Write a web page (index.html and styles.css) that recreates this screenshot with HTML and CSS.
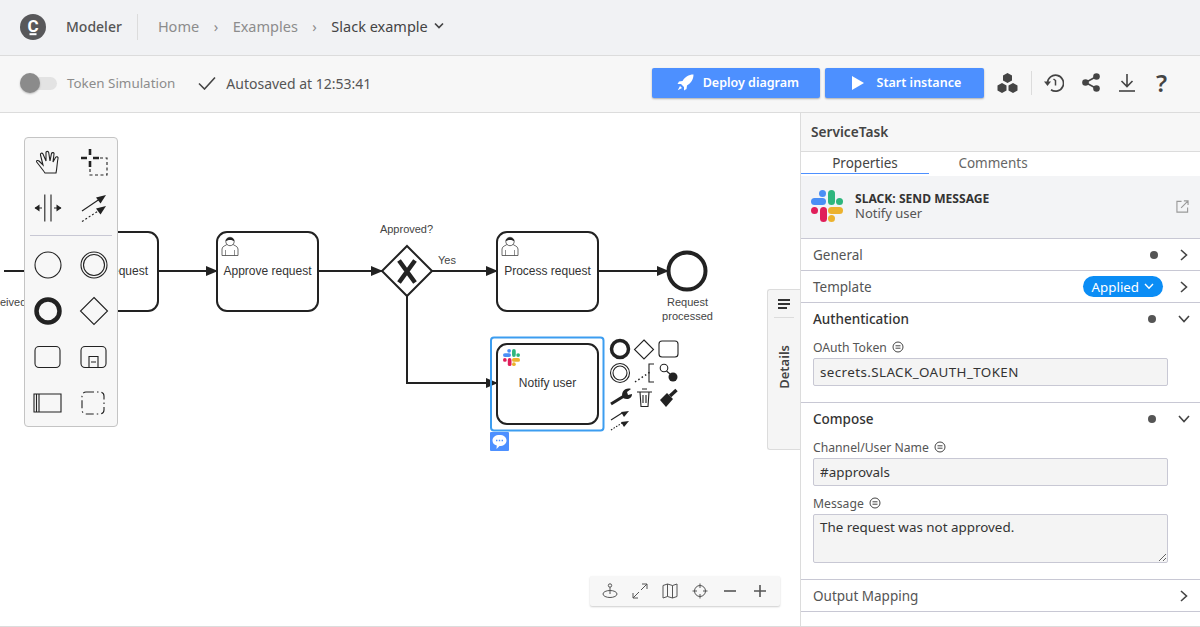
FILE: index.html
```html
<!DOCTYPE html>
<html lang="en">
<head>
    <meta charset="UTF-8">
    <title>Modeler - Slack example</title>
    <link rel="stylesheet" href="styles.css">
</head>
<body>
    <svg class="defs" width="0" height="0">
        <symbol id="slack" viewBox="0 0 32 32">
            <rect x="0" y="8" width="15" height="7" rx="3.5" fill="#4a8ff5"/>
            <circle cx="11.5" cy="3.5" r="3.5" fill="#4a8ff5"/>
            <rect x="17" y="0" width="7" height="15" rx="3.5" fill="#2eb67d"/>
            <circle cx="28.5" cy="11.5" r="3.5" fill="#2eb67d"/>
            <rect x="17" y="17" width="15" height="7" rx="3.5" fill="#ecb22e"/>
            <circle cx="20.5" cy="28.5" r="3.5" fill="#ecb22e"/>
            <rect x="9" y="17" width="7" height="15" rx="3.5" fill="#e01e5a"/>
            <circle cx="3.5" cy="20.5" r="3.5" fill="#e01e5a"/>
        </symbol>
        <symbol id="user" viewBox="0 0 18 20">
            <path d="M1 19.5V13C1 10.2 5 9.6 6.5 8H11.500C13 9.600 17 10.200 17 13V19.500Z" fill="#fff" stroke="#444" stroke-width=".8"/>
            <path d="M4.500 19.500V14M13.500 19.500V14" fill="none" stroke="#444" stroke-width=".6"/>
            <circle cx="9" cy="5.500" r="4.200" fill="#fff" stroke="#444" stroke-width=".8"/>
            <path d="M4.800 5.500C4.300 .2 13.700 .2 13.200 5.500C12 3.500 6 3.500 4.800 5.500Z" fill="#222"/>
        </symbol>
        <symbol id="connect" viewBox="0 0 30 30">
            <path d="M3 18L20 6.500" fill="none" stroke="#222" stroke-width="1.100"/>
            <path d="M27 2L21.500 10.500L17 4.500Z" fill="#222"/>
            <path d="M3 28.500L20 17.500" fill="none" stroke="#222" stroke-width="1.100" stroke-dasharray="2 2"/>
            <path d="M27 13L21.500 21.500L17 15.500Z" fill="#222"/>
        </symbol>
        <symbol id="info" viewBox="0 0 12 12">
            <circle cx="6" cy="6" r="5" fill="none" stroke="#444" stroke-width="1"/>
            <path d="M3.500 4.800H8.500M3.500 7.200H8.500" stroke="#444" stroke-width="1"/>
        </symbol>
    </svg>

    <header class="topbar">
        <svg class="logo" width="26" height="26" viewBox="0 0 26 26">
            <circle cx="13" cy="13" r="13" fill="#58585a"/>
            <text x="13" y="17.500" text-anchor="middle" class="logo-letter">C</text>
            <rect x="9.500" y="19.200" width="7" height="2" fill="#fff"/>
        </svg>
        <span class="brand">Modeler</span>
        <span class="topbar-sep"></span>
        <nav class="crumbs">
            <span class="crumb">Home</span>
            <span class="crumb-arrow">›</span>
            <span class="crumb">Examples</span>
            <span class="crumb-arrow">›</span>
            <span class="crumb current">Slack example</span>
            <svg class="crumb-chevron" width="10" height="7" viewBox="0 0 10 7"><path d="M1 1.500L5 5.500L9 1.500" fill="none" stroke="#444" stroke-width="1.700"/></svg>
        </nav>
    </header>

    <div class="toolbar">
        <div class="toggle"><span class="knob"></span></div>
        <span class="toggle-label">Token Simulation</span>
        <svg class="check" width="18" height="14" viewBox="0 0 18 14"><path d="M1 7.500L6.500 13L17 1.500" fill="none" stroke="#444" stroke-width="1.600"/></svg>
        <span class="saved">Autosaved at 12:53:41</span>
        <div class="toolbar-right">
            <button class="btn btn-deploy">
                <svg width="17" height="17" viewBox="0 0 17 17"><path d="M16.500 .5C11.500 .5 8 3 5.500 7L2 7.500L.5 10L4 10L7 13L7 16.500L9.500 15L10 11.500C14 9 16.500 5.500 16.500 .5Z" fill="#fff"/><path d="M3 12L.8 16.200L5 14Z" fill="#fff"/></svg>
                Deploy diagram
            </button>
            <button class="btn btn-start">
                <svg width="12" height="14" viewBox="0 0 12 14"><path d="M0 0L12 7L0 14Z" fill="#fff"/></svg>
                Start instance
            </button>
            <svg class="tool-icon cubes" width="21" height="20" viewBox="0 0 21 20"><path d="M10.500 0L15 2.500V7.500L10.500 10L6 7.500V2.500Z" fill="#444"/><path d="M5 10L9.500 12.500V17.500L5 20L.5 17.500V12.500Z" fill="#444"/><path d="M16 10L20.500 12.500V17.500L16 20L11.500 17.500V12.500Z" fill="#444"/></svg>
            <span class="tool-sep"></span>
            <svg class="tool-icon history" width="20" height="20" viewBox="0 0 20 20"><path d="M3.500 10A8 8 0 1 1 7 16.800" fill="none" stroke="#444" stroke-width="1.700"/><path d="M0 8.500H7L3.500 13Z" fill="#444"/><path d="M9.500 6L11.500 7.500V12.500" fill="none" stroke="#444" stroke-width="1.500"/></svg>
            <svg class="tool-icon share" width="18" height="19" viewBox="0 0 18 19"><circle cx="3.500" cy="9.500" r="3.300" fill="#444"/><circle cx="14.500" cy="3.500" r="3.300" fill="#444"/><circle cx="14.500" cy="15.500" r="3.300" fill="#444"/><path d="M3.500 9.500L14.500 3.500M3.500 9.500L14.500 15.500" stroke="#444" stroke-width="1.500"/></svg>
            <svg class="tool-icon download" width="16" height="18" viewBox="0 0 16 18"><path d="M8 0V12M2.500 7L8 12.500L13.500 7" fill="none" stroke="#444" stroke-width="1.600"/><path d="M0 17H16" stroke="#444" stroke-width="1.600"/></svg>
            <span class="help">?</span>
        </div>
    </div>

    <main class="workspace">
        <section class="canvas">
            <svg class="diagram" width="800" height="513" viewBox="0 113 800 513">
                <defs>
                    <marker id="arrow" viewBox="0 0 12 10" refX="11" refY="5" markerWidth="12" markerHeight="10" markerUnits="userSpaceOnUse" orient="auto"><path d="M0 0L12 5L0 10Z" fill="#222"/></marker>
                </defs>
                <g class="flow">
                    <path d="M4 271H60"/>
                    <path d="M158 271H217" marker-end="url(#arrow)"/>
                    <path d="M318 271H382" marker-end="url(#arrow)"/>
                    <path d="M432 271H497" marker-end="url(#arrow)"/>
                    <path d="M598 271H668" marker-end="url(#arrow)"/>
                    <path d="M407 296V383H497" marker-end="url(#arrow)"/>
                </g>
                <g class="shape">
                    <rect x="58" y="232" width="100" height="79" rx="10"/>
                    <rect x="217" y="232" width="101" height="79" rx="10"/>
                    <rect x="497" y="232" width="101" height="79" rx="10"/>
                    <rect x="497" y="344" width="101" height="80" rx="10"/>
                    <path d="M407 246L432 271L407 296L382 271Z"/>
                </g>
                <path class="gate-x" d="M399 260.500L415 282.500M415 260.500L399 282.500"/>
                <circle class="end-event" cx="687" cy="271" r="18.500"/>
                <rect class="selection" x="491" y="337.500" width="112.500" height="93" rx="3"/>
                <use href="#user" x="221" y="236" width="18" height="20"/>
                <use href="#user" x="501" y="236" width="18" height="20"/>
                <use href="#slack" x="503" y="349" width="17" height="17"/>
                <text class="label" x="0" y="306" text-anchor="start">eived</text>
                <text class="label task" x="148" y="275" text-anchor="end">Submit request</text>
                <text class="label task" x="267.500" y="275">Approve request</text>
                <text class="label task" x="547.500" y="275">Process request</text>
                <text class="label task" x="547.500" y="387">Notify user</text>
                <text class="label" x="406.500" y="233">Approved?</text>
                <text class="label" x="447" y="264">Yes</text>
                <text class="label" x="687.500" y="306">Request</text>
                <text class="label" x="687.500" y="320">processed</text>

                <g class="pad">
                    <circle class="heavy" cx="620" cy="349" r="8.500"/>
                    <path d="M644 340L653.500 349.500L644 359L634.500 349.500Z"/>
                    <rect x="659" y="341" width="19" height="16" rx="3"/>
                    <circle cx="620" cy="373" r="9.500"/>
                    <circle cx="620" cy="373" r="7"/>
                    <path class="dots" d="M635 382L650 372"/>
                    <path d="M654 364H649V382H654"/>
                    <circle cx="664" cy="368" r="3.800"/>
                    <path d="M666.500 371L670 374"/>
                    <circle cx="673" cy="377" r="4.500" class="solid"/>
                    <path class="grip" d="M611 404L624 396"/>
                    <path class="solid" d="M623 398C620 393 625 387 631 389L627 392L628 395L632 394C632 399 627 400 623 398Z"/>
                    <path d="M637 392H652M640 392L641 406.500H648L649 392M642 389H647M643 395V403M646 395V403"/>
                    <path class="solid" d="M660 400L667 393L673 399L666 407Z"/>
                    <path class="brush" d="M670 396L676.500 390"/>
                    <path d="M611 420L622 413"/>
                    <path d="M629 411L624 417L621 412Z" class="solid"/>
                    <path class="dashed" d="M611 430L622 423"/>
                    <path d="M629 421L624 427L621 422Z" class="solid"/>
                </g>
                <rect x="490" y="432" width="19" height="19" rx="1" fill="#4d90ff"/>
                <path d="M499.500 435C503.500 435 506.500 437 506.500 440.500C506.500 444 503.500 446 499.500 446L496.500 449L496.800 445.500C494 445 492.500 443 492.500 440.500C492.500 437 495.500 435 499.500 435Z" fill="#fff"/>
                <path d="M496 440.500H503" stroke="#4d90ff" stroke-width="1.400" stroke-dasharray="1.400 1.400"/>
            </svg>

            <div class="palette">
                <div class="palette-grid">
                    <svg viewBox="0 0 30 30"><path transform="translate(3 4)" class="ico" d="M9 22C7 19 3 14 .7 11C0 9.500 2 9 3 10L7 14L4.500 4C4 2.300 6 1.500 7 3L10 10L10 1.500C10 0 12.500 0 12.700 1.500L14 10L15.500 2.500C16 1 18.500 1.500 18 3L17 11L19.500 6.500C20.500 5 22.500 6 22 7.500C21 12 21 18 20 22Z"/></svg>
                    <svg viewBox="0 0 30 30"><path d="M11 2V8M11 14V20M2 11H8M14 11H20" fill="none" stroke="#222" stroke-width="2.600"/><path class="ico" d="M21 11H28V28H11V21" stroke-dasharray="3 2.500"/></svg>
                    <svg viewBox="0 0 30 30"><path class="ico" d="M11.800 1.500V28.500M18 1.500V28.500M2 15H9M21 15H28"/><path d="M1.500 15L6.500 11.500V18.500ZM28.500 15L23.500 11.500V18.500Z" fill="#222"/></svg>
                    <svg viewBox="0 0 30 30"><use href="#connect"/></svg>
                </div>
                <div class="palette-sep"></div>
                <div class="palette-grid">
                    <svg viewBox="0 0 30 30"><circle class="ico" cx="15" cy="15" r="13"/></svg>
                    <svg viewBox="0 0 30 30"><circle class="ico" cx="15" cy="15" r="13"/><circle class="ico" cx="15" cy="15" r="10.500"/></svg>
                    <svg viewBox="0 0 30 30"><circle class="ico thick" cx="15" cy="15" r="11.500"/></svg>
                    <svg viewBox="0 0 30 30"><path class="ico" d="M15 1.500L28.500 15L15 28.500L1.500 15Z"/></svg>
                    <svg viewBox="0 0 30 30"><rect class="ico" x="2" y="4.500" width="25" height="21" rx="4"/></svg>
                    <svg viewBox="0 0 30 30"><rect class="ico" x="2" y="4.500" width="25" height="21" rx="4"/><path class="ico" d="M10 25.500V14.500H19V25.500M12 20H17"/></svg>
                    <svg viewBox="0 0 30 30"><path class="ico" d="M1 6H28V24H1ZM6 6V24M3.500 6V24"/></svg>
                    <svg viewBox="0 0 30 30"><rect class="ico" x="3" y="4" width="22" height="22" rx="4" stroke-dasharray="8 3 1.500 3"/></svg>
                </div>
            </div>

            <aside class="details-tab">
                <svg width="12" height="10" viewBox="0 0 12 10"><path d="M0 1H12M0 5H12M0 9H9" stroke="#333" stroke-width="1.800"/></svg>
                <span class="details-sep"></span>
                <span class="details-label">Details</span>
            </aside>

            <div class="zoom-bar">
                <svg viewBox="0 0 16 16"><circle class="zi" cx="8" cy="2.500" r="1.700"/><path class="zi" d="M8 4.200V11"/><ellipse class="zi" cx="8" cy="11" rx="7" ry="3.500"/></svg>
                <svg viewBox="0 0 16 16"><path class="zi" d="M9 7L15 1M10 1H15V6M7 9L1 15M1 10V15H6"/></svg>
                <svg viewBox="0 0 16 16"><path class="zi" d="M1 2.500L5.500 1L10.500 2.500L15 1V13.500L10.500 15L5.500 13.500L1 15ZM5.500 1V13.500M10.500 2.500V15"/></svg>
                <svg viewBox="0 0 16 16"><circle class="zi" cx="8" cy="8" r="5.500"/><path class="zi" d="M8 .5V5M8 11V15.500M.5 8H5M11 8H15.500"/></svg>
                <svg viewBox="0 0 16 16"><path class="zi wide" d="M2 8H14"/></svg>
                <svg viewBox="0 0 16 16"><path class="zi wide" d="M2 8H14M8 2V14"/></svg>
            </div>
        </section>

        <aside class="panel">
            <div class="panel-title">ServiceTask</div>
            <div class="tabs">
                <span class="tab active">Properties</span>
                <span class="tab">Comments</span>
            </div>
            <div class="template">
                <svg class="template-logo" width="32" height="32"><use href="#slack"/></svg>
                <div class="template-text">
                    <div class="template-name">SLACK: SEND MESSAGE</div>
                    <div class="template-sub">Notify user</div>
                </div>
                <svg class="external" width="13" height="13" viewBox="0 0 14 14"><path d="M6 1.500H1V13H12.500V8M5.500 8.500L13 1M8.500 1H13V5.500" fill="none" stroke="#999" stroke-width="1.200"/></svg>
            </div>

            <div class="group">
                <div class="group-head"><span class="group-title">General</span><i class="dot"></i><svg class="chev" viewBox="0 0 8 12"><path d="M1 1L6.500 6L1 11"/></svg></div>
            </div>
            <div class="group">
                <div class="group-head"><span class="group-title">Template</span><span class="applied">Applied <svg width="10" height="7" viewBox="0 0 10 7"><path d="M1 1L5 5.200L9 1" fill="none" stroke="#fff" stroke-width="1.400"/></svg></span><svg class="chev" viewBox="0 0 8 12"><path d="M1 1L6.500 6L1 11"/></svg></div>
            </div>
            <div class="group open">
                <div class="group-head"><span class="group-title strong">Authentication</span><i class="dot"></i><svg class="chev down" viewBox="0 0 12 8"><path d="M1 1L6 6.500L11 1"/></svg></div>
                <label class="field-label">OAuth Token <svg width="12" height="12"><use href="#info"/></svg></label>
                <input class="field caps" type="text" value="secrets.SLACK_OAUTH_TOKEN">
            </div>
            <div class="group open">
                <div class="group-head"><span class="group-title strong">Compose</span><i class="dot"></i><svg class="chev down" viewBox="0 0 12 8"><path d="M1 1L6 6.500L11 1"/></svg></div>
                <label class="field-label">Channel/User Name <svg width="12" height="12"><use href="#info"/></svg></label>
                <input class="field" type="text" value="#approvals">
                <label class="field-label">Message <svg width="12" height="12"><use href="#info"/></svg></label>
                <textarea class="field area">The request was not approved.</textarea>
            </div>
            <div class="group">
                <div class="group-head"><span class="group-title">Output Mapping</span><svg class="chev" viewBox="0 0 8 12"><path d="M1 1L6.500 6L1 11"/></svg></div>
            </div>
        </aside>
    </main>
</body>
</html>
```

FILE: styles.css
```css
* {
    box-sizing: border-box;
}
body {
    margin: 0;
    width: 1200px;
    height: 627px;
    overflow: hidden;
    background: #fff;
    color: #444;
    font-family: "Noto Sans", Arial, sans-serif;
    font-size: 14px;
}
.defs {
    position: absolute;
}

.topbar {
    height: 56px;
    display: flex;
    align-items: center;
    padding: 0 0 2px 20px;
    background: #f1f2f4;
    border-bottom: 1px solid #dcdcdc;
}
.logo-letter {
    fill: #fff;
    font-family: "Roboto", sans-serif;
    font-size: 17px;
    font-weight: 700;
}
.brand {
    margin-left: 20px;
    color: #555;
    font-weight: 500;
}
.topbar-sep {
    width: 1px;
    height: 26px;
    margin: 0 20px 0 15px;
    background: #dcdcdc;
}
.crumbs {
    display: flex;
    align-items: center;
    margin-top: -2px;
    font-size: 14.500px;
}
.crumb {
    color: #8c8c8c;
}
.crumb.current {
    color: #444;
}
.crumb-arrow {
    width: 33.500px;
    text-align: center;
    color: #8c8c8c;
}
.crumb-chevron {
    margin-left: 6px;
}

.toolbar {
    height: 57px;
    display: flex;
    align-items: center;
    padding: 0 0 2px 20px;
    background: #f7f7f7;
    border-bottom: 1px solid #dcdcdc;
}
.toggle {
    position: relative;
    width: 37px;
    height: 13px;
    border-radius: 7px;
    background: #e3e3e3;
}
.knob {
    position: absolute;
    left: 0;
    top: -3.500px;
    width: 20px;
    height: 20px;
    border-radius: 50%;
    background: #8b8b8b;
    box-shadow: 0 1px 2px rgba(0, 0, 0, 0.25);
}
.toggle-label {
    margin-left: 10px;
    color: #8c8c8c;
    font-size: 13.400px;
}
.check {
    margin-left: 23px;
}
.saved {
    margin-left: 10px;
    color: #555;
}
.toolbar-right {
    margin-left: auto;
    display: flex;
    align-items: center;
    margin-top: -1px;
    padding-right: 33px;
}
.btn {
    height: 30px;
    display: flex;
    align-items: center;
    justify-content: center;
    gap: 9px;
    padding: 0 0 0 4px;
    border: none;
    border-radius: 2px;
    background: #4d90ff;
    color: #fff;
    font-family: inherit;
    font-size: 12.500px;
    font-weight: 600;
    box-shadow: 0 1px 2px rgba(0, 0, 0, 0.3);
}
.btn-deploy {
    width: 168px;
}
.btn-start {
    width: 159px;
    margin-left: 5px;
    gap: 13px;
}
.cubes {
    margin-left: 13px;
}
.tool-sep {
    width: 1px;
    height: 24px;
    margin: 0 12px 0 13px;
    background: #dcdcdc;
}
.share {
    margin-left: 18px;
}
.download {
    margin-left: 19px;
}
.help {
    margin-left: 21px;
    color: #444;
    font-size: 24px;
    font-weight: 600;
    line-height: 1;
}

.workspace {
    height: 514px;
    display: flex;
    border-bottom: 1px solid #dcdcdc;
}
.canvas {
    position: relative;
    width: 800px;
    overflow: hidden;
}
.diagram {
    display: block;
}
.flow path {
    fill: none;
    stroke: #222;
    stroke-width: 2;
}
.shape rect,
.shape path {
    fill: #fff;
    stroke: #222;
    stroke-width: 2;
}
.gate-x {
    fill: none;
    stroke: #222;
    stroke-width: 4.500;
}
.end-event {
    fill: #fff;
    stroke: #222;
    stroke-width: 4;
}
.selection {
    fill: none;
    stroke: #3c9df0;
    stroke-width: 2;
}
.label {
    fill: #444;
    font-family: "Liberation Sans", Arial, sans-serif;
    font-size: 11px;
    text-anchor: middle;
}
.label[text-anchor="start"] {
    text-anchor: start;
}
.label[text-anchor="end"] {
    text-anchor: end;
}
.task {
    fill: #333;
    font-size: 12px;
}
.pad circle,
.pad path,
.pad rect {
    fill: none;
    stroke: #222;
    stroke-width: 1.100;
}
.pad .solid {
    fill: #222;
    stroke: none;
}
.pad .heavy {
    stroke-width: 3.500;
}
.pad .dots {
    stroke-width: 1.500;
    stroke-dasharray: 1.500 2.500;
}
.pad .dashed {
    stroke-dasharray: 1.500 1.500;
}
.pad .grip {
    stroke-width: 3;
}
.pad .brush {
    stroke-width: 3.500;
}

.palette {
    position: absolute;
    left: 24px;
    top: 24px;
    width: 94px;
    height: 290px;
    padding-top: 1px;
    background: #f7f7f7;
    border: 1px solid #c4c4c4;
    border-radius: 4px;
}
.palette-grid {
    display: grid;
    grid-template-columns: 46px 46px;
    justify-content: center;
    grid-auto-rows: 46px;
}
.palette-grid svg {
    width: 30px;
    height: 30px;
    margin: 8px;
}
.palette-sep {
    height: 1px;
    margin: 4px 5px 6px;
    background: #c8c8d4;
}
.ico {
    fill: none;
    stroke: #222;
    stroke-width: 1.100;
}
.ico.thick {
    stroke-width: 4.500;
}

.details-tab {
    position: absolute;
    left: 767px;
    top: 176px;
    width: 33px;
    height: 161px;
    display: flex;
    flex-direction: column;
    align-items: center;
    padding-top: 9px;
    background: #f5f5f5;
    border: 1px solid #dcdcdc;
    border-right: none;
    border-radius: 3px 0 0 3px;
}
.details-sep {
    width: 20px;
    height: 1px;
    margin: 8px 0 27px;
    background: #dcdcdc;
}
.details-label {
    writing-mode: vertical-rl;
    transform: rotate(180deg);
    color: #444;
    font-size: 13px;
    font-weight: 600;
}

.zoom-bar {
    position: absolute;
    left: 590px;
    top: 463px;
    width: 190px;
    height: 30px;
    display: flex;
    align-items: center;
    justify-content: space-around;
    padding: 0 5px;
    background: #f7f7f7;
    border-radius: 2px;
    box-shadow: 0 1px 2px rgba(0, 0, 0, 0.2);
}
.zoom-bar svg {
    width: 16px;
    height: 16px;
}
.zi {
    fill: none;
    stroke: #555;
    stroke-width: 1;
}
.zi.wide {
    stroke-width: 1.600;
}

.panel {
    width: 400px;
    border-left: 1px solid #dcdcdc;
    background: #fff;
}
.panel-title {
    height: 39px;
    padding: 10px 0 0 10px;
    background: #f7f7f7;
    border-bottom: 1px solid #dcdcdc;
    color: #444;
    font-size: 13.700px;
    line-height: 18px;
    font-weight: 600;
}
.tabs {
    height: 24px;
    display: flex;
}
.tab {
    width: 128px;
    height: 22px;
    text-align: center;
    color: #666;
    font-size: 13.500px;
    line-height: 22px;
}
.tab.active {
    color: #444;
    border-bottom: 1px solid #4d90ff;
}
.template {
    height: 63px;
    display: flex;
    align-items: center;
    padding: 0 11px 2px 10px;
    background: #f3f4f6;
    border-bottom: 1px solid #c8c8d4;
}
.template-text {
    margin-left: 12px;
    flex: 1;
}
.template-name {
    color: #333;
    font-size: 12.100px;
    font-weight: 700;
    line-height: 15px;
}
.template-sub {
    color: #555;
    font-size: 13px;
    line-height: 15px;
}
.group {
    padding: 0 0 16px 12px;
    border-bottom: 1px solid #c8c8d4;
}
.group:not(.open) {
    padding-bottom: 0;
}
.group-head {
    height: 31px;
    display: flex;
    align-items: center;
    padding-right: 11px;
}
.group-title {
    flex: 1;
    color: #555;
    font-size: 13.500px;
}
.group-title.strong {
    color: #333;
    font-weight: 500;
}
.dot {
    width: 8px;
    height: 8px;
    margin-right: 22px;
    border-radius: 50%;
    background: #555;
}
.chev {
    width: 8px;
    height: 12px;
    margin-right: 1px;
    fill: none;
    stroke: #444;
    stroke-width: 1.600;
}
.chev.down {
    width: 12px;
    height: 8px;
    margin-right: -1px;
}
.applied {
    height: 21px;
    display: flex;
    align-items: center;
    gap: 5px;
    margin-right: 17px;
    padding: 0 9px;
    border-radius: 11px;
    background: #0b8df5;
    color: #fff;
    font-size: 13.300px;
}
.field-label {
    display: flex;
    align-items: center;
    gap: 5px;
    height: 14px;
    margin: 6px 0 4px;
    color: #555;
    font-size: 12.200px;
}
.field + .field-label {
    margin-top: 10px;
}
.field {
    display: block;
    width: 355px;
    height: 28px;
    padding: 0 6px;
    background: #f4f4f4;
    border: 1px solid #c8c8d4;
    border-radius: 2px;
    color: #333;
    font-family: inherit;
    font-size: 13.400px;
}
.field.caps {
    letter-spacing: 0.4px;
}
.area {
    height: 49px;
    padding-top: 3px;
}
```
